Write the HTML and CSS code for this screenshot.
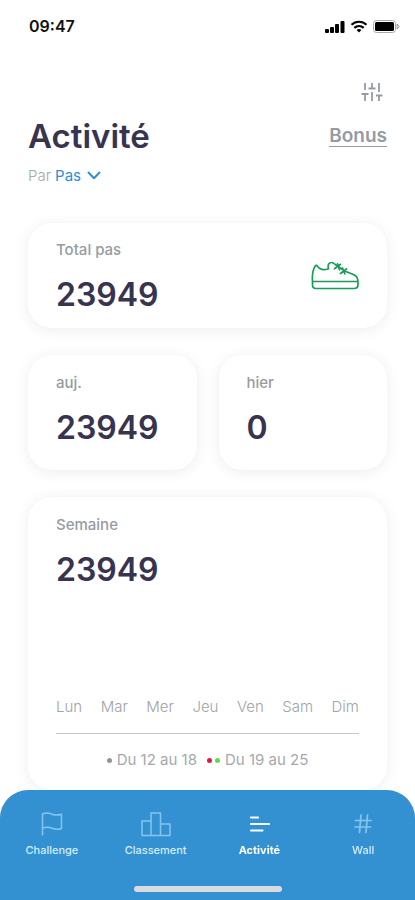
FILE: index.html
```html
<!DOCTYPE html>
<html lang="fr">
<head>
<meta charset="utf-8">
<meta name="viewport" content="width=device-width, initial-scale=1">
<title>Activité</title>
<link rel="stylesheet" href="styles.css">
</head>
<body>
<div class="status">
  <span class="clock">09:47</span>
  <div class="status-icons">
    <svg width="20" height="13" viewBox="0 0 20 13" aria-hidden="true"><rect x="0" y="9" width="4" height="4" rx="1"/><rect x="5" y="7" width="4" height="6" rx="1"/><rect x="10" y="4" width="4" height="9" rx="1"/><rect x="15.5" y="1" width="4" height="12" rx="1"/></svg>
    <svg width="18" height="13" viewBox="0 0 18 13" fill="none" stroke="#000" stroke-width="2.2" aria-hidden="true"><path d="M1.5 4.8C5.7.7 12.300.7 16.500 4.800M4.300 7.900C7 5.400 11 5.400 13.700 7.900"/><path d="M6.600 10C8 8.800 10 8.800 11.400 10L9 12.500Z" fill="#000" stroke="none"/></svg>
    <svg width="27" height="13" viewBox="0 0 27 13" aria-hidden="true"><rect x="0.500" y="0.500" width="22" height="12" rx="3" fill="none" stroke="#aaa"/><rect x="2" y="2" width="19" height="9" rx="1.500"/><path d="M24 4L26.300 6.500L24 9Z" fill="#eee" stroke="#888" stroke-width=".8"/></svg>
  </div>
</div>

<main class="page">
  <header class="head">
    <button class="filter" type="button" aria-label="Filtres">
      <svg width="22" height="20" viewBox="0 0 22 20" fill="none" stroke="#969ba3" stroke-width="1.800" aria-hidden="true"><path d="M4 1V8M.5 12H7.500M4 12V19M11 1V6M7.500 6.500H14.500M11 10V19M18 1V10M15 13.500H21.500M18 13.500V19"/></svg>
    </button>
    <div class="title-row">
      <h1>Activité</h1>
      <a class="bonus" href="#bonus">Bonus</a>
    </div>
    <div class="sort">
      <label for="metric">Par</label>
      <select id="metric"><option>Pas</option></select>
      <svg width="14" height="9" viewBox="0 0 14 9" fill="none" stroke="#2f8fd3" stroke-width="2" stroke-linecap="round" stroke-linejoin="round" aria-hidden="true"><path d="M1.500 1.500L7 7.300L12.500 1.500"/></svg>
    </div>
  </header>

  <section class="card total">
    <div class="total-text">
      <h2>Total pas</h2>
      <p class="value">23949</p>
    </div>
    <svg width="48" height="29" viewBox="0 0 48 29" fill="none" stroke="#189c57" stroke-width="1.700" stroke-linecap="round" stroke-linejoin="round" aria-hidden="true"><path d="M1.500 20.500C1 14 2 8.500 4.200 5C4.900 4.100 5.800 4.200 6.400 5.200C8.300 8.700 13 9.500 17.500 7.700C16.300 4 18 1.500 20.500 1.500C22.500 1.500 23.500 2.800 25 4L33 9.500C37 11.800 41 12.300 43.800 14.300C46.500 15.900 47 18 47 21V23.500C47 26 45.500 27.500 43 27.500H5C2.500 27.500 1.500 26 1.500 24ZM1.500 20.500H47M23.500 7.700L29.500 3.300M26.500 2.800L28.500 8.700M29.500 12.500L35.500 8M31.500 7L33.800 12.800"/></svg>
  </section>

  <div class="pair">
    <section class="card day">
      <h2>auj.</h2>
      <p class="value">23949</p>
    </section>
    <section class="card day">
      <h2>hier</h2>
      <p class="value">0</p>
    </section>
  </div>

  <section class="card week">
    <h2>Semaine</h2>
    <p class="value">23949</p>
    <ul class="days">
      <li>Lun</li><li>Mar</li><li>Mer</li><li>Jeu</li><li>Ven</li><li>Sam</li><li>Dim</li>
    </ul>
    <div class="legend">
      <span class="key"><i class="dot"></i>Du 12 au 18</span>
      <span class="key"><span class="dots"><i class="dot red"></i><i class="dot green"></i></span>Du 19 au 25</span>
    </div>
  </section>
</main>

<nav class="tabs">
  <div class="tab-row">
    <a href="#challenge">
      <svg width="24" height="26" viewBox="0 0 24 26" fill="none" stroke="#85c5ef" stroke-width="1.500" stroke-linejoin="round" aria-hidden="true"><path d="M2.500 24.500V3C6.500 1.200 9 2 12 3.200C15.500 4.500 18 4.500 21.500 3.200V17.500C18 19 15.500 18.500 12 17.200C9 16 6.500 15.500 2.500 17.200"/></svg>
      <span>Challenge</span>
    </a>
    <a href="#classement">
      <svg width="30" height="26" viewBox="0 0 30 26" fill="none" stroke="#85c5ef" stroke-width="1.500" stroke-linejoin="round" aria-hidden="true"><path d="M10 24.500H1V10H10M10 24.500V2H19.500V24.500ZM19.500 13H29V24.500H19.500"/></svg>
      <span>Classement</span>
    </a>
    <a class="active" href="#activite" aria-current="page">
      <svg width="22" height="26" viewBox="0 0 22 26" fill="none" stroke="#fff" stroke-width="2.200" stroke-linecap="round" aria-hidden="true"><path d="M3 6.500H10M3 13H21M3 19.500H14.500"/></svg>
      <span>Activité</span>
    </a>
    <a href="#wall">
      <svg width="20" height="26" viewBox="0 0 20 26" fill="none" stroke="#85c5ef" stroke-width="1.700" stroke-linecap="round" aria-hidden="true"><path d="M8 4L6.500 21.500M14.500 4L13 21.500M2.500 9.500H18M2 16H17.500"/></svg>
      <span>Wall</span>
    </a>
  </div>
  <div class="home-bar"></div>
</nav>
</body>
</html>
```

FILE: styles.css
```css
* {
  box-sizing: border-box;
}

body {
  margin: 0;
  padding-bottom: 110px;
  background: #fff;
  color: #38344f;
  font-family: Inter, "Liberation Sans", sans-serif;
}

h1, h2, p, ul {
  margin: 0;
  padding: 0;
}

svg {
  display: block;
  flex: none;
}

.status {
  display: flex;
  align-items: center;
  justify-content: space-between;
  height: 52px;
  padding: 0 15px 0 29px;
}

.clock {
  color: #111;
  font-size: 16px;
  font-weight: 600;
}

.status-icons {
  display: flex;
  gap: 5px;
}

.page {
  padding: 0 28px;
}

.head {
  padding-top: 28px;
  margin-bottom: 37px;
}

.filter {
  display: block;
  margin-left: auto;
  padding: 2px 4px;
  border: 0;
  background: none;
}

.title-row {
  display: flex;
  align-items: center;
  justify-content: space-between;
  padding: 11px 0 7px;
}

h1 {
  font-size: 33px;
  font-weight: 600;
  line-height: 42px;
}

.bonus {
  border-bottom: 1px solid #969ba3;
  color: #969ba3;
  font-size: 19px;
  font-weight: 600;
  line-height: 21px;
  text-decoration: none;
}

.sort {
  display: flex;
  align-items: center;
  height: 22px;
  color: #a5a8ad;
  font-size: 15px;
  font-weight: 300;
}

.sort select {
  appearance: none;
  margin: 0 6px 0 4px;
  padding: 0;
  border: 0;
  background: none;
  color: #2f8fd3;
  font: inherit;
  font-weight: 400;
}

.card {
  border-radius: 24px;
  background: #fff;
  box-shadow: 0 2px 14px rgba(40, 55, 65, 0.09);
  padding: 18px 28px;
}

.card h2 {
  color: #969ba3;
  font-size: 15px;
  font-weight: 500;
  line-height: 20px;
}

.value {
  margin-top: 13px;
  font-size: 32px;
  font-weight: 600;
  line-height: 44px;
}

.total {
  display: flex;
  align-items: center;
  justify-content: space-between;
  padding-top: 0;
  padding-bottom: 0;
  height: 105px;
}

.total-text {
  padding-top: 6px;
}

.pair {
  display: grid;
  grid-template-columns: 1fr 1fr;
  gap: 22px;
  margin: 27px 0;
}

.day {
  height: 115px;
}

.week {
  height: 293px;
}

.days {
  display: flex;
  justify-content: space-between;
  margin-top: 105px;
  padding-bottom: 16px;
  border-bottom: 1px solid #c8c8ca;
  color: #a0a3a8;
  font-size: 15px;
  font-weight: 300;
  line-height: 20px;
  list-style: none;
}

.legend {
  display: flex;
  justify-content: center;
  gap: 10px;
  margin-top: 16px;
  color: #a5a8ad;
  font-size: 15px;
  line-height: 20px;
}

.key {
  display: flex;
  align-items: center;
  gap: 5px;
}

.dots {
  display: flex;
  gap: 3px;
}

.dot {
  width: 5px;
  height: 5px;
  border-radius: 50%;
  background: #929497;
}

.red {
  background: #e5173f;
}

.green {
  background: #63d84e;
}

.tabs {
  position: fixed;
  right: 0;
  bottom: 0;
  left: 0;
  height: 110px;
  padding: 21px 0 8px;
  border-radius: 28px 28px 0 0;
  background: #3391d1;
  display: flex;
  flex-direction: column;
  align-items: center;
  justify-content: space-between;
}

.tab-row {
  display: grid;
  grid-template-columns: repeat(4, 1fr);
  width: 100%;
}

.tab-row a {
  display: flex;
  flex-direction: column;
  align-items: center;
  gap: 5px;
  color: #d5ecfc;
  font-size: 11px;
  font-weight: 500;
  line-height: 16px;
  text-decoration: none;
}

.tab-row .active {
  color: #fff;
  font-weight: 700;
}

.home-bar {
  width: 148px;
  height: 6px;
  border-radius: 3px;
  background: #d9dbe0;
}
```
